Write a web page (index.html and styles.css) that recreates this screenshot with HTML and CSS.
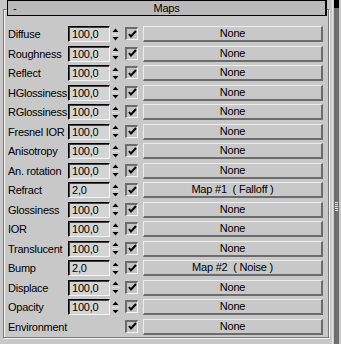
FILE: index.html
```html
<!DOCTYPE html>
<html>
<head>
<meta charset="utf-8">
<link rel="stylesheet" href="styles.css">
</head>
<body>
<div class="panel">
  <div class="main">
    <div class="rollout">
      <div class="rhead"><span class="minus">-</span><span class="title">Maps</span><span></span></div>
      <div class="maps">
        <span class="lbl">Diffuse</span><span class="num">100,0</span><span class="spin"><svg width="9" height="15" viewBox="0 0 9 15"><path d="M4.5 1.5 L7.5 5 L1.5 5 Z M1.5 10 L7.5 10 L4.5 13.5 Z" fill="#000"/><path d="M1 7.5 H8" stroke="#e6e6e6" stroke-width="1"/></svg></span><span class="chk"><svg width="9" height="9" viewBox="0 0 9 9"><path d="M1 4 L3 6.5 L8 1" fill="none" stroke="#000" stroke-width="2"/></svg></span><span class="btn">None</span>

        <span class="lbl">Roughness</span><span class="num">100,0</span><span class="spin"><svg width="9" height="15" viewBox="0 0 9 15"><path d="M4.5 1.5 L7.5 5 L1.5 5 Z M1.5 10 L7.5 10 L4.5 13.5 Z" fill="#000"/><path d="M1 7.5 H8" stroke="#e6e6e6" stroke-width="1"/></svg></span><span class="chk"><svg width="9" height="9" viewBox="0 0 9 9"><path d="M1 4 L3 6.5 L8 1" fill="none" stroke="#000" stroke-width="2"/></svg></span><span class="btn">None</span>

        <span class="lbl">Reflect</span><span class="num">100,0</span><span class="spin"><svg width="9" height="15" viewBox="0 0 9 15"><path d="M4.5 1.5 L7.5 5 L1.5 5 Z M1.5 10 L7.5 10 L4.5 13.5 Z" fill="#000"/><path d="M1 7.5 H8" stroke="#e6e6e6" stroke-width="1"/></svg></span><span class="chk"><svg width="9" height="9" viewBox="0 0 9 9"><path d="M1 4 L3 6.5 L8 1" fill="none" stroke="#000" stroke-width="2"/></svg></span><span class="btn">None</span>

        <span class="lbl">HGlossiness</span><span class="num">100,0</span><span class="spin"><svg width="9" height="15" viewBox="0 0 9 15"><path d="M4.5 1.5 L7.5 5 L1.5 5 Z M1.5 10 L7.5 10 L4.5 13.5 Z" fill="#000"/><path d="M1 7.5 H8" stroke="#e6e6e6" stroke-width="1"/></svg></span><span class="chk"><svg width="9" height="9" viewBox="0 0 9 9"><path d="M1 4 L3 6.5 L8 1" fill="none" stroke="#000" stroke-width="2"/></svg></span><span class="btn">None</span>

        <span class="lbl">RGlossiness</span><span class="num">100,0</span><span class="spin"><svg width="9" height="15" viewBox="0 0 9 15"><path d="M4.5 1.5 L7.5 5 L1.5 5 Z M1.5 10 L7.5 10 L4.5 13.5 Z" fill="#000"/><path d="M1 7.5 H8" stroke="#e6e6e6" stroke-width="1"/></svg></span><span class="chk"><svg width="9" height="9" viewBox="0 0 9 9"><path d="M1 4 L3 6.5 L8 1" fill="none" stroke="#000" stroke-width="2"/></svg></span><span class="btn">None</span>

        <span class="lbl">Fresnel IOR</span><span class="num">100,0</span><span class="spin"><svg width="9" height="15" viewBox="0 0 9 15"><path d="M4.5 1.5 L7.5 5 L1.5 5 Z M1.5 10 L7.5 10 L4.5 13.5 Z" fill="#000"/><path d="M1 7.5 H8" stroke="#e6e6e6" stroke-width="1"/></svg></span><span class="chk"><svg width="9" height="9" viewBox="0 0 9 9"><path d="M1 4 L3 6.5 L8 1" fill="none" stroke="#000" stroke-width="2"/></svg></span><span class="btn">None</span>

        <span class="lbl">Anisotropy</span><span class="num">100,0</span><span class="spin"><svg width="9" height="15" viewBox="0 0 9 15"><path d="M4.5 1.5 L7.5 5 L1.5 5 Z M1.5 10 L7.5 10 L4.5 13.5 Z" fill="#000"/><path d="M1 7.5 H8" stroke="#e6e6e6" stroke-width="1"/></svg></span><span class="chk"><svg width="9" height="9" viewBox="0 0 9 9"><path d="M1 4 L3 6.5 L8 1" fill="none" stroke="#000" stroke-width="2"/></svg></span><span class="btn">None</span>

        <span class="lbl">An. rotation</span><span class="num">100,0</span><span class="spin"><svg width="9" height="15" viewBox="0 0 9 15"><path d="M4.5 1.5 L7.5 5 L1.5 5 Z M1.5 10 L7.5 10 L4.5 13.5 Z" fill="#000"/><path d="M1 7.5 H8" stroke="#e6e6e6" stroke-width="1"/></svg></span><span class="chk"><svg width="9" height="9" viewBox="0 0 9 9"><path d="M1 4 L3 6.5 L8 1" fill="none" stroke="#000" stroke-width="2"/></svg></span><span class="btn">None</span>

        <span class="lbl">Refract</span><span class="num">2,0</span><span class="spin"><svg width="9" height="15" viewBox="0 0 9 15"><path d="M4.5 1.5 L7.5 5 L1.5 5 Z M1.5 10 L7.5 10 L4.5 13.5 Z" fill="#000"/><path d="M1 7.5 H8" stroke="#e6e6e6" stroke-width="1"/></svg></span><span class="chk"><svg width="9" height="9" viewBox="0 0 9 9"><path d="M1 4 L3 6.5 L8 1" fill="none" stroke="#000" stroke-width="2"/></svg></span><span class="btn">Map #1  ( Falloff )</span>

        <span class="lbl">Glossiness</span><span class="num">100,0</span><span class="spin"><svg width="9" height="15" viewBox="0 0 9 15"><path d="M4.5 1.5 L7.5 5 L1.5 5 Z M1.5 10 L7.5 10 L4.5 13.5 Z" fill="#000"/><path d="M1 7.5 H8" stroke="#e6e6e6" stroke-width="1"/></svg></span><span class="chk"><svg width="9" height="9" viewBox="0 0 9 9"><path d="M1 4 L3 6.5 L8 1" fill="none" stroke="#000" stroke-width="2"/></svg></span><span class="btn">None</span>

        <span class="lbl">IOR</span><span class="num">100,0</span><span class="spin"><svg width="9" height="15" viewBox="0 0 9 15"><path d="M4.5 1.5 L7.5 5 L1.5 5 Z M1.5 10 L7.5 10 L4.5 13.5 Z" fill="#000"/><path d="M1 7.5 H8" stroke="#e6e6e6" stroke-width="1"/></svg></span><span class="chk"><svg width="9" height="9" viewBox="0 0 9 9"><path d="M1 4 L3 6.5 L8 1" fill="none" stroke="#000" stroke-width="2"/></svg></span><span class="btn">None</span>

        <span class="lbl">Translucent</span><span class="num">100,0</span><span class="spin"><svg width="9" height="15" viewBox="0 0 9 15"><path d="M4.5 1.5 L7.5 5 L1.5 5 Z M1.5 10 L7.5 10 L4.5 13.5 Z" fill="#000"/><path d="M1 7.5 H8" stroke="#e6e6e6" stroke-width="1"/></svg></span><span class="chk"><svg width="9" height="9" viewBox="0 0 9 9"><path d="M1 4 L3 6.5 L8 1" fill="none" stroke="#000" stroke-width="2"/></svg></span><span class="btn">None</span>

        <span class="lbl">Bump</span><span class="num">2,0</span><span class="spin"><svg width="9" height="15" viewBox="0 0 9 15"><path d="M4.5 1.5 L7.5 5 L1.5 5 Z M1.5 10 L7.5 10 L4.5 13.5 Z" fill="#000"/><path d="M1 7.5 H8" stroke="#e6e6e6" stroke-width="1"/></svg></span><span class="chk"><svg width="9" height="9" viewBox="0 0 9 9"><path d="M1 4 L3 6.5 L8 1" fill="none" stroke="#000" stroke-width="2"/></svg></span><span class="btn">Map #2  ( Noise )</span>

        <span class="lbl">Displace</span><span class="num">100,0</span><span class="spin"><svg width="9" height="15" viewBox="0 0 9 15"><path d="M4.5 1.5 L7.5 5 L1.5 5 Z M1.5 10 L7.5 10 L4.5 13.5 Z" fill="#000"/><path d="M1 7.5 H8" stroke="#e6e6e6" stroke-width="1"/></svg></span><span class="chk"><svg width="9" height="9" viewBox="0 0 9 9"><path d="M1 4 L3 6.5 L8 1" fill="none" stroke="#000" stroke-width="2"/></svg></span><span class="btn">None</span>

        <span class="lbl">Opacity</span><span class="num">100,0</span><span class="spin"><svg width="9" height="15" viewBox="0 0 9 15"><path d="M4.5 1.5 L7.5 5 L1.5 5 Z M1.5 10 L7.5 10 L4.5 13.5 Z" fill="#000"/><path d="M1 7.5 H8" stroke="#e6e6e6" stroke-width="1"/></svg></span><span class="chk"><svg width="9" height="9" viewBox="0 0 9 9"><path d="M1 4 L3 6.5 L8 1" fill="none" stroke="#000" stroke-width="2"/></svg></span><span class="btn">None</span>

        <span class="lbl wide">Environment</span><span class="chk"><svg width="9" height="9" viewBox="0 0 9 9"><path d="M1 4 L3 6.5 L8 1" fill="none" stroke="#000" stroke-width="2"/></svg></span><span class="btn">None</span>
      </div>
    </div>
  </div>
  <div class="scroll">
    <div class="bar"><div class="cap"></div><div class="grip"></div></div>
  </div>
</div>
</body>
</html>
```

FILE: styles.css
```css
html, body {
  margin: 0;
  padding: 0;
}
body {
  background: #c8c8c8;
  font-family: "Liberation Sans", Arial, sans-serif;
  font-size: 11px;
  color: #000;
}
.panel {
  display: flex;
  width: 341px;
  height: 344px;
  overflow: hidden;
}
.main {
  width: 332px;
  flex: none;
}
.rollout {
  margin: 9px 3px 0 3px;
  height: 329px;
  box-sizing: border-box;
  border: 1px solid #7a7a7a;
  box-shadow: inset 1px 1px 0 #f4f4f4, 1px 1px 0 #f4f4f4;
}
.rhead {
  position: relative;
  margin: -10px 1px 0 3px;
  height: 16px;
  box-sizing: border-box;
  border: 1px solid #000;
  border-right-width: 2px;
  background: #bababa;
  display: grid;
  grid-template-columns: 1fr auto 1fr;
  align-items: center;
  line-height: 14px;
}
.minus {
  padding-left: 5px;
}
.title {
  letter-spacing: -0.2px;
}
.maps {
  display: grid;
  grid-template-columns: 60px 43px 14px 18px 180px;
  grid-auto-rows: 16px;
  row-gap: 3.5px;
  margin-top: 10px;
  padding-left: 4px;
}
.lbl {
  line-height: 16px;
  white-space: nowrap;
  letter-spacing: -0.25px;
}
.lbl.wide {
  grid-column: 1 / span 3;
}
.num {
  width: 42px;
  height: 16px;
  box-sizing: border-box;
  border-top: 1px solid #000;
  border-left: 1px solid #000;
  border-right: 1px solid #f4f4f4;
  border-bottom: 1px solid #f4f4f4;
  box-shadow: inset 1px 1px 0 #404040;
  background: #d4d4d4;
  padding-left: 3px;
  line-height: 14px;
  letter-spacing: -0.2px;
}
.spin {
  width: 9px;
  height: 16px;
  display: flex;
  align-items: center;
}
.spin svg {
  display: block;
}
.chk {
  width: 13px;
  height: 13px;
  margin-top: 1px;
  box-sizing: border-box;
  border-top: 2px solid #6c6c6c;
  border-left: 2px solid #6c6c6c;
  border-right: 1px solid #f4f4f4;
  border-bottom: 1px solid #f4f4f4;
  background: #c4c4c4;
  display: flex;
  align-items: center;
  justify-content: center;
}
.chk svg {
  display: block;
}
.btn {
  height: 16px;
  box-sizing: border-box;
  border-top: 1px solid #ececec;
  border-left: 1px solid #ececec;
  border-right: 2px solid #6c6c6c;
  border-bottom: 2px solid #6c6c6c;
  background: #c8c8c8;
  text-align: center;
  line-height: 13px;
  white-space: pre;
  letter-spacing: -0.2px;
}
.scroll {
  width: 9px;
  flex: none;
  border-left: 1px solid #e6e6e6;
  box-sizing: border-box;
  padding-left: 1px;
}
.bar {
  width: 5px;
  height: 344px;
  background: #6e6e6e;
  display: flex;
  flex-direction: column;
}
.cap {
  height: 8px;
  background: #000;
}
.grip {
  margin-top: 194px;
  margin-left: 1px;
  width: 3px;
  height: 10px;
  background: repeating-linear-gradient(to bottom, #e8e8e8 0 1px, transparent 1px 2px);
}
```
